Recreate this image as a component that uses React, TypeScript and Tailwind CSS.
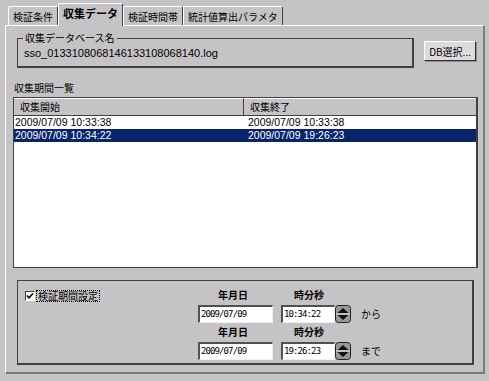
import React from 'react';

const font = { fontFamily: '"Noto Sans CJK JP", "Liberation Sans", sans-serif' };
const latin = { fontFamily: '"Liberation Sans", Arial, sans-serif' };
const mono = { fontFamily: '"DejaVu Sans Mono", monospace' };

const tabs = ['検証条件', '収集データ', '検証時間帯', '統計値算出パラメタ'];

const rows = [
  { start: '2009/07/09 10:33:38', end: '2009/07/09 10:33:38', selected: false },
  { start: '2009/07/09 10:34:22', end: '2009/07/09 19:26:23', selected: true },
];

const periods = [
  { d: '2009/07/09', t: '10:34:22', s: 'から' },
  { d: '2009/07/09', t: '19:26:23', s: 'まで' },
];

const Spinner: React.FC = () => (
  <div className="w-[16px] h-[18px] flex items-center justify-center">
    <svg width="16" height="18" viewBox="0 0 16 18">
      <rect x="0.5" y="0.5" width="15" height="17" rx="3" fill="#9a979a" stroke="#202020" />
      <path d="M2.5 8 L8 3 L13.5 8 Z" fill="#101010" />
      <path d="M2.5 10 L8 15 L13.5 10 Z" fill="#101010" />
      <line x1="1" y1="9" x2="15" y2="9" stroke="#e8e8e8" />
    </svg>
  </div>
);

const Field: React.FC<{ value: string; w: string }> = ({ value, w }) => (
  <div
    className={`${w} h-[18px] bg-white border-t-2 border-l-2 border-t-[#505050] border-l-[#505050] border-b border-r border-b-[#f0f0f0] border-r-[#f0f0f0] pl-[1px] text-[9px] leading-[15px] tracking-[-0.9px] text-black`}
    style={mono}
  >
    {value}
  </div>
);

export default function App() {
  return (
    <div className="w-[489px] h-[381px] bg-[#c6c3c6] text-[10px] text-black overflow-hidden" style={font}>
      {/* tab strip */}
      <div className="flex items-end pl-[8px] h-[26px]">
        {tabs.map((t, i) => {
          const sel = i === 1;
          return (
            <div
              key={t}
              className={`relative flex items-center justify-center border-t border-l border-r border-t-white border-l-white border-r-[#404040] rounded-t-[2px] bg-[#c6c3c6] ${
                sel ? 'h-[23px] px-[4px] text-[11px] font-bold z-10 pb-[3px]' : 'h-[19px] px-[4px] text-[10px] mb-[1px]'
              }`}
            >
              {t}
            </div>
          );
        })}
      </div>
      {/* panel */}
      <div className="-mt-[1px] mx-[5px] w-[480px] h-[349px] border-t border-l border-t-white border-l-white border-r-2 border-b-2 border-r-[#808080] border-b-[#7a787a] flex flex-col px-[7px]">
        <div className="flex items-start mt-[12px] pl-[4px]">
          <div className="relative w-[398px] h-[30px] border border-[#404040] border-r-2 border-b-2 pl-[6px] pt-[8px]">
            <span className="absolute left-[5px] -top-[7px] bg-[#c6c3c6] px-[2px] leading-[12px] text-[10px]">
              収集データベース名
            </span>
            <div className="text-[11px] leading-[12px]" style={latin}>
              sso_0133108068146133108068140.log
            </div>
          </div>
          <button
            className="ml-[10px] mt-[3px] w-[52px] h-[20px] bg-[#dedbde] border border-t-white border-l-white border-r-[#303030] border-b-[#303030] text-[10px] leading-[17px] shadow-[1px_1px_0_#909090]"
            style={font}
          >
            DB選択...
          </button>
        </div>

        <div className="mt-[14px] pl-[1px] h-[12px] leading-[12px]">収集期間一覧</div>

        {/* table */}
        <div className="mt-[3px] w-[465px] h-[171px] bg-white border border-[#404040] border-r-2 flex flex-col">
          <div className="flex h-[18px] bg-[#c6c3c6] border-b border-[#404040]">
            <div className="w-[230px] border-r border-[#404040] pl-[6px] leading-[16px] border-t border-t-white">収集開始</div>
            <div className="flex-1 pl-[6px] leading-[16px] border-t border-t-white">収集終了</div>
          </div>
          {rows.map((r) => (
            <div
              key={r.start}
              className={`flex h-[13px] leading-[13px] text-[10.5px] ${r.selected ? 'bg-[#0a246a] text-white' : ''}`}
              style={latin}
            >
              <div className="w-[231px] pl-[1px]">{r.start}</div>
              <div className="flex-1 pl-[3px]">{r.end}</div>
            </div>
          ))}
        </div>

        {/* period settings */}
        <div className="mt-[12px] ml-[4px] w-[457px] h-[85px] border border-[#404040] border-r-2 border-b-2 flex">
          <div className="pl-[7px] pt-[9px] flex items-start gap-[1px] w-[180px]">
            <div className="w-[10px] h-[10px] mt-[1px] bg-white border border-t-[#404040] border-l-[#404040] border-r-white border-b-white flex items-center justify-center">
              <svg width="8" height="8" viewBox="0 0 8 8">
                <path d="M1 3.5 L3 5.8 L7 1.5" stroke="#000" strokeWidth="1.6" fill="none" />
              </svg>
            </div>
            <span className="border border-dotted border-black px-[1px] leading-[10px] text-[10px]">検証期間設定</span>
          </div>
          <div className="flex flex-col">
            {periods.map((x, i) => (
              <div key={i} className={i === 0 ? 'mt-[8px]' : 'mt-[3px]'}>
                <div className="flex h-[12px] leading-[12px] font-bold text-[10px]">
                  <div className="w-[70px] text-center">年月日</div>
                  <div className="w-[14px]" />
                  <div className="w-[54px] text-center">時分秒</div>
                </div>
                <div className="flex items-center mt-[4px]">
                  <Field value={x.d} w="w-[75px]" />
                  <div className="w-[8px]" />
                  <Field value={x.t} w="w-[54px]" />
                  <Spinner />
                  <span className="ml-[10px] text-[10px] leading-[12px]">{x.s}</span>
                </div>
              </div>
            ))}
          </div>
        </div>
      </div>
    </div>
  );
}
